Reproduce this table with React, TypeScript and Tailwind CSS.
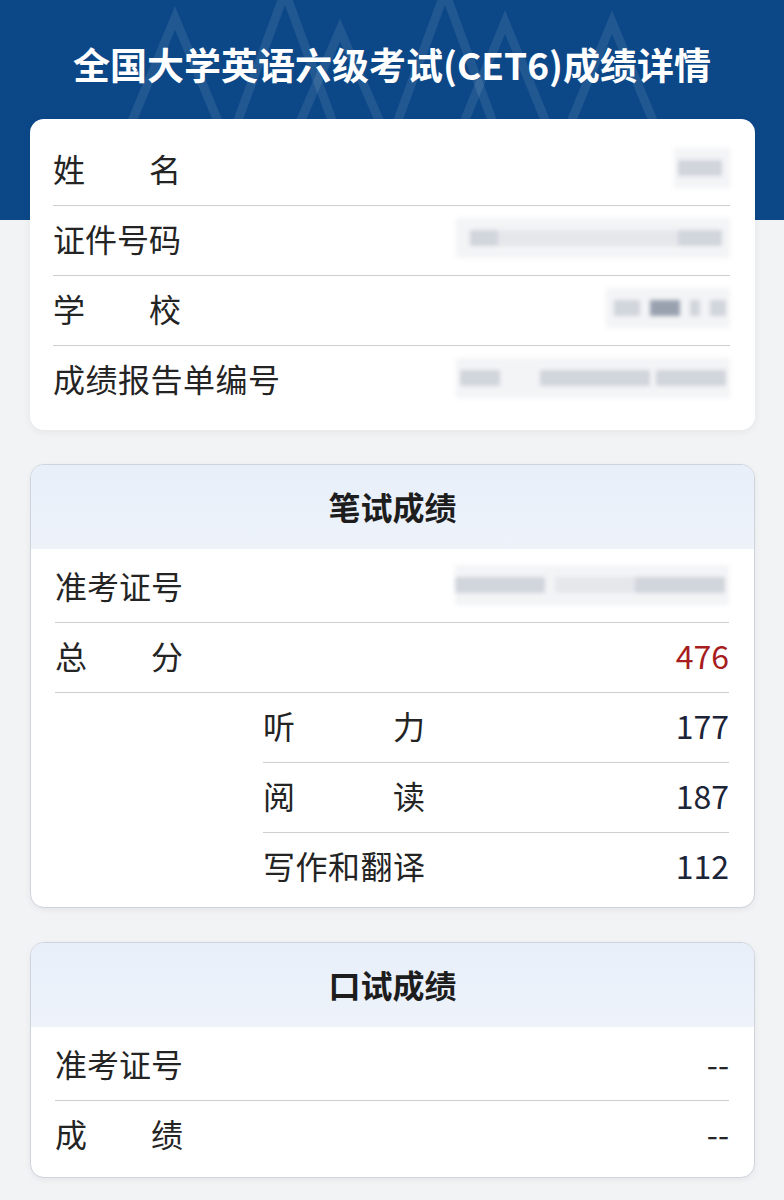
import React from 'react';

const FONT = { fontFamily: '"Noto Sans CJK SC", "Noto Sans", sans-serif' };

// label whose characters spread across a fixed width
function Spread({ text, width }: { text: string; width: string }) {
  return (
    <span className={`flex justify-between ${width}`}>
      {text.split('').map((c, i) => (
        <span key={i}>{c}</span>
      ))}
    </span>
  );
}

function Blur({ w, blocks }: { w: string; blocks: { l: number; w: number; shade: string }[] }) {
  return (
    <div className={`relative h-[40px] ${w} bg-gray-100 blur-[2px]`}>
      {blocks.map((b, i) => (
        <div
          key={i}
          className={`absolute top-[12px] h-[16px] ${b.shade}`}
          style={{ left: b.l, width: b.w }}
        />
      ))}
    </div>
  );
}

function Row({
  label,
  labelWidth = 'w-[128px]',
  value,
  last,
  valueClass = 'text-[#1c2437]',
}: {
  label: string;
  labelWidth?: string;
  value: React.ReactNode;
  last?: boolean;
  valueClass?: string;
}) {
  return (
    <div
      className={`flex h-[70px] items-center justify-between pb-[6px] text-[32px] text-[#242424] ${
        last ? '' : 'border-b border-[#cfcfcf]'
      }`}
    >
      <Spread text={label} width={labelWidth} />
      <div className={`${valueClass}`}>{value}</div>
    </div>
  );
}

function SectionCard({ title, children }: { title: string; children: React.ReactNode }) {
  return (
    <div className="ml-[30px] w-[725px] overflow-hidden rounded-[14px] border border-[#cdd4de] bg-white shadow-[0_2px_6px_rgba(0,0,0,0.06)]">
      <div className="flex h-[84px] items-center justify-center bg-gradient-to-b from-[#e8eff9] to-[#eef3fa] pb-[2px] text-[32px] font-bold text-[#1d1d1d]">
        {title}
      </div>
      <div className="pl-[24px] pr-[25px]">{children}</div>
    </div>
  );
}

export default function App() {
  return (
    <div className="min-h-[1200px] w-[784px] bg-[#f2f3f5] pb-[22px]" style={FONT}>
      <div className="relative h-[220px] overflow-hidden bg-[#0c4888]">
        <svg className="absolute inset-0" width="784" height="220" viewBox="0 0 784 220">
          <g fill="none" stroke="#ffffff" strokeOpacity="0.09" strokeWidth="9" strokeLinejoin="miter">
            <polyline points="95,210 175,18 255,210" />
            <polyline points="205,210 285,-8 365,210" />
            <polyline points="262,210 340,30 418,210" />
            <polyline points="365,210 445,-8 525,210" />
            <polyline points="428,210 505,22 582,210" />
            <polyline points="535,210 612,22 690,210" />
          </g>
        </svg>
        <h1 className="relative pt-[39px] text-center text-[37px] font-bold leading-[50px] text-white">
          全国大学英语六级考试(CET6)成绩详情
        </h1>
      </div>

      <div className="relative -mt-[101px] ml-[30px] w-[725px] rounded-[14px] bg-white pt-[17px] pb-[14px] pl-[23px] pr-[25px] shadow-[0_2px_8px_rgba(0,0,0,0.06)]">
        <Row
          label="姓名"
          value={<Blur w="w-[56px]" blocks={[{ l: 4, w: 44, shade: 'bg-gray-300' }]} />}
        />
        <Row
          label="证件号码"
          value={
            <Blur
              w="w-[274px]"
              blocks={[
                { l: 14, w: 28, shade: 'bg-gray-300' },
                { l: 42, w: 180, shade: 'bg-gray-200' },
                { l: 222, w: 44, shade: 'bg-gray-300' },
              ]}
            />
          }
        />
        <Row
          label="学校"
          value={
            <Blur
              w="w-[124px]"
              blocks={[
                { l: 8, w: 26, shade: 'bg-gray-300' },
                { l: 44, w: 30, shade: 'bg-gray-400' },
                { l: 84, w: 10, shade: 'bg-gray-300' },
                { l: 104, w: 16, shade: 'bg-gray-300' },
              ]}
            />
          }
        />
        <Row
          label="成绩报告单编号"
          labelWidth="w-[227px]"
          last
          value={
            <Blur
              w="w-[274px]"
              blocks={[
                { l: 4, w: 40, shade: 'bg-gray-300' },
                { l: 84, w: 110, shade: 'bg-gray-300' },
                { l: 200, w: 70, shade: 'bg-gray-300' },
              ]}
            />
          }
        />
      </div>

      <div className="mt-[34px]">
        <SectionCard title="笔试成绩">
          <div className="pt-[4px]" />
          <Row
            label="准考证号"
            value={
              <Blur
                w="w-[274px]"
                blocks={[
                  { l: 0, w: 90, shade: 'bg-gray-300' },
                  { l: 100, w: 80, shade: 'bg-gray-200' },
                  { l: 180, w: 90, shade: 'bg-gray-300' },
                ]}
              />
            }
          />
          <Row label="总分" value="476" valueClass="text-[#a71d1d]" />
          <div className="pl-[208px] pb-[4px]">
            <Row label="听力" labelWidth="w-[162px]" value="177" />
            <Row label="阅读" labelWidth="w-[162px]" value="187" />
            <Row label="写作和翻译" labelWidth="w-[162px]" value="112" last />
          </div>
        </SectionCard>
      </div>

      <div className="mt-[34px]">
        <SectionCard title="口试成绩">
          <div className="pt-[4px]" />
          <Row label="准考证号" value="--" valueClass="text-[#242424]" />
          <Row label="成绩" value="--" valueClass="text-[#242424]" last />
          <div className="pb-[6px]" />
        </SectionCard>
      </div>
    </div>
  );
}
